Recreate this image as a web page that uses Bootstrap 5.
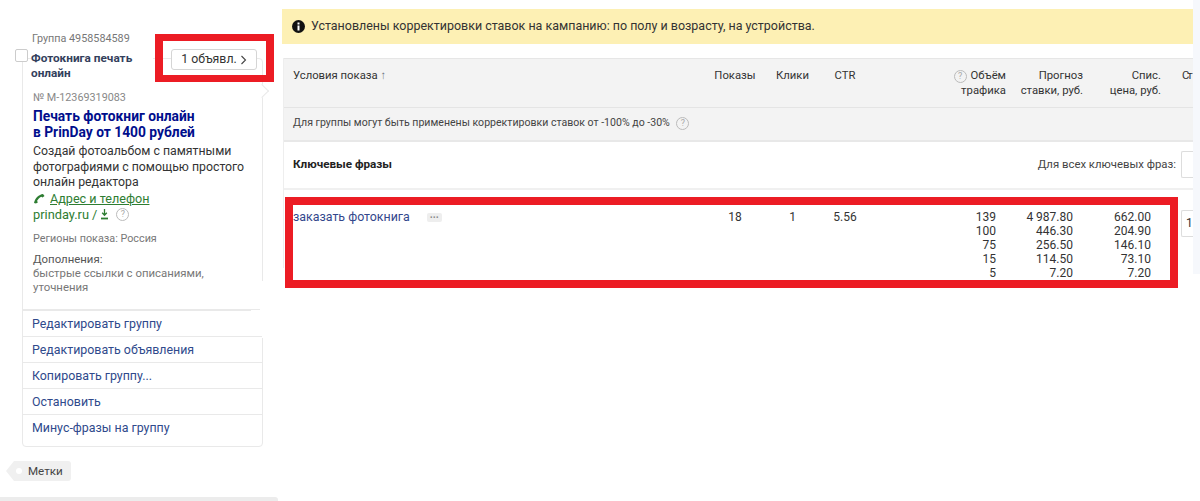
<!DOCTYPE html>
<html lang="ru"><head><meta charset="utf-8"><title>Группа</title>
<link href="https://cdn.jsdelivr.net/npm/bootstrap@5.3.0/dist/css/bootstrap.min.css" rel="stylesheet">
<style>
html,body{height:501px;overflow:hidden}
body{font-family:Roboto,"Noto Sans",sans-serif;font-size:12px;color:#333;background:#fff;position:relative}
.pagewrap{display:flex;height:501px}
.leftside{width:282px;flex:none;padding:31px 0 0 22px}
.grouplabel{font-size:10.8px;line-height:16px;color:#777;margin-left:10px;margin-bottom:11px}
.adcard{width:241px;--bs-card-border-color:#e9e9e9;--bs-card-border-radius:4px;--bs-card-inner-border-radius:3px;height:389px}
.adcard::before{content:"";position:absolute;right:-2px;top:222px;width:4px;height:57px;background:#fff}
.adcard::after{content:"";position:absolute;right:-5px;top:27px;width:10px;height:10px;background:#fff;border-top:1px solid #e9e9e9;border-right:1px solid #e9e9e9;transform:rotate(45deg)}
.chk{position:absolute;left:-8px;top:-10px;width:13px;height:13px;border:1px solid #ccc;border-radius:2px;background:#fff}
.headrow{display:flex;margin-top:-8px;justify-content:space-between;align-items:flex-start}
.adtitle{font-weight:700;font-size:11.8px;line-height:15px;color:#33405c;margin-left:8px;width:122px;background:#fff}
.adsbtn{font-size:12.3px;line-height:19px;height:21px;width:86px;margin:-2px 5px 0 0;border:1px solid #d5d5d5;border-radius:3px;background:#fff;padding:0;color:#333}
.adbody{padding:0 0 0 10px}
.adnum{font-size:10.8px;line-height:15px;color:#888;margin-top:9px}
.adhead{font-size:13.8px;font-weight:700;line-height:16px;color:#000e8c;margin-top:3px}
.addesc{font-size:12.3px;line-height:15.5px;color:#333;margin-top:4px}
.adlink{font-size:12.6px;line-height:16px;color:#2e7d32;margin-top:0;display:flex;align-items:center;gap:5px}
.adlink u{color:#2e7d32}
.adsite{font-size:12.8px;line-height:16px;color:#2e7d32;display:flex;align-items:center;gap:3px}
.adregion{font-size:10.8px;line-height:15px;color:#777;margin-top:8px}
.adextra{font-size:11.4px;line-height:14px;color:#777;margin-top:6px}
.adextra b{font-weight:400;color:#555;display:block}
.admenu{margin-top:15px;border-top:0;--bs-list-group-border-color:#e9e9e9;--bs-list-group-bg:transparent}
.admenu::before{content:"";display:block;height:1px;background:#e9e9e9;margin-right:11px}
.admenu .list-group-item{padding:0 0 0 9px;font-size:12.4px;line-height:25px;color:#2f4a8c}
.qmark{display:inline-flex;width:13px;height:13px;border:1px solid #bbb;border-radius:50%;font-size:9px;line-height:1;color:#aaa;align-items:center;justify-content:center;flex:none}
.tagpill{position:absolute;left:14px;top:461px;height:20px;padding:0 8px 0 14px;line-height:20px;font-size:11.6px;background:#f0f0f0;border-radius:0 3px 3px 0;color:#444}
.tagpill::before{content:"";position:absolute;left:-8px;top:0;border-style:solid;border-width:10px 8px 10px 0;border-color:transparent #f0f0f0 transparent transparent}
.tagpill::after{content:"";position:absolute;left:2px;top:7px;width:6px;height:6px;border-radius:50%;background:#fff}
.bottomshade{position:absolute;left:0;top:497px;width:278px;height:4px;background:#ececec;border-radius:0 3px 0 0}
.rightside{flex:1;min-width:0;padding-top:9px;padding-right:7px;position:relative}
.rightside::after{content:"";position:absolute;right:0;top:0;width:7px;height:274px;background:#f6f8fc}
.notice{height:35px;background:#fdf0b4;display:flex;align-items:center;gap:6px;padding-left:10px;font-size:12.46px;color:#333;margin-bottom:14px}
.tablewrap{margin-left:1px;overflow:hidden;height:222px;position:relative}
.tablewrap::before{content:"";position:absolute;left:0;top:0;width:1px;height:210px;background:#eee}
.kwtable{table-layout:fixed;width:910px;margin:0;--bs-table-bg:transparent;color:#333;font-size:12px}
.kwtable td,.kwtable th{padding:0;border:0;font-weight:400;vertical-align:top}
.headtr th{background:#f3f3f3;height:49px;padding-top:10px;line-height:14.5px;border-top:1px solid #e6e6e6;border-bottom:1px solid #e4e4e4;font-size:11.3px}
.notetr td{background:#f3f3f3;height:33px;font-size:10.57px;line-height:30px;padding-left:10px;border-bottom:2px solid #e8e8e8;color:#444}
.phrasetr td{height:48px;vertical-align:middle;border-bottom:2px solid #f0f0f0}
.datatr td{padding-top:20px;line-height:14px;font-size:12px}
.cellc{text-align:center}
.cellr{text-align:right;padding-right:10px!important}
.datatr .cellr{padding-right:20px!important}
.firstcell{padding-left:10px!important}
.lastcell{padding-left:10px!important;white-space:nowrap}
.headtr .lastcell{padding-left:11px!important;letter-spacing:-2px}
.kwlink{color:#33478c;margin-left:10px;font-size:12.4px;line-height:14px}
.dotsbtn{display:inline-block;width:15px;height:9px;background:#eee;border-radius:2px;margin-left:17px;font-size:10px;font-weight:700;line-height:9px;text-align:center;color:#888;vertical-align:middle}
.allinput{display:inline-block;width:12px;height:27px;border:1px solid #ddd;border-right:0;border-radius:2px 0 0 2px;background:#fff;vertical-align:middle;line-height:25px;padding-left:4px}
.keytitle{margin-left:10px;font-size:11.7px;font-weight:700;color:#222}
.keyall{font-size:11.35px;color:#444;margin-right:-5px}
.frame{position:absolute;border-style:solid;border-color:#ec1c24;pointer-events:none}
.frame1{left:155px;top:34px;width:119px;height:48px;border-width:7px 8px}
.frame2{left:285px;top:197px;width:893px;height:91px;border-width:8px}
</style></head>
<body>
<div class="pagewrap">
<aside class="leftside">
  <div class="grouplabel">Группа 4958584589</div>
  <div class="card adcard">
    <span class="chk"></span>
    <div class="headrow">
      <div class="adtitle">Фотокнига печать онлайн</div>
      <button type="button" class="adsbtn">1 объявл. <svg width="7" height="10" viewBox="0 0 7 10"><path d="M1.500 1l4 4-4 4" fill="none" stroke="#444" stroke-width="1.100"/></svg></button>
    </div>
    <div class="adbody">
      <div class="adnum">№ М-12369319083</div>
      <div class="adhead">Печать фотокниг онлайн<br>в PrinDay от 1400 рублей</div>
      <div class="addesc">Создай фотоальбом с памятными<br>фотографиями с помощью простого<br>онлайн редактора</div>
      <div class="adlink"><svg width="12" height="11" viewBox="0 0 12 11"><path d="M1 10C2 5 6 1.500 10 1l1.500 2-2 1.500-1.300-.8C6.500 4.500 5 6 4 8l1 1.300L3 10.500z" fill="#2e7d32"/></svg><u>Адрес и телефон</u></div>
      <div class="adsite">prinday.ru / <svg width="9" height="11" viewBox="0 0 9 11"><path d="M4.500 0v6M2.200 3.800l2.300 2.500 2.300-2.500" fill="none" stroke="#2e7d32" stroke-width="1.300"/><path d="M1 9.500h7" stroke="#2e7d32" stroke-width="1.800"/></svg> <span class="qmark ms-1">?</span></div>
      <div class="adregion">Регионы показа: Россия</div>
      <div class="adextra"><b>Дополнения:</b>быстрые ссылки с описаниями,<br>уточнения</div>
    </div>
    <div class="list-group list-group-flush admenu">
      <a class="list-group-item" href="#">Редактировать группу</a>
      <a class="list-group-item" href="#">Редактировать объявления</a>
      <a class="list-group-item" href="#">Копировать группу...</a>
      <a class="list-group-item" href="#">Остановить</a>
      <a class="list-group-item" href="#">Минус-фразы на группу</a>
    </div>
  </div>
  <div class="tagpill">Метки</div>
</aside>
<main class="rightside">
  <div class="notice"><svg width="13" height="13" viewBox="0 0 13 13"><circle cx="6.500" cy="6.500" r="6.500" fill="#111"/><rect x="5.500" y="5.500" width="2" height="5" fill="#fff"/><rect x="5.500" y="2.500" width="2" height="2" fill="#fff"/></svg><span>Установлены корректировки ставок на кампанию: по полу и возрасту, на устройства.</span></div>
  <div class="tablewrap">
    <table class="table kwtable">
      <colgroup><col style="width:417px"><col style="width:70px"><col style="width:45px"><col style="width:60px"><col style="width:141px"><col style="width:77px"><col style="width:78px"><col style="width:22px"></colgroup>
      <tr class="headtr">
        <th class="firstcell">Условия показа <span class="text-secondary">↑</span></th>
        <th class="cellc">Показы</th><th class="cellc">Клики</th><th class="cellc">CTR</th>
        <th class="cellr"><span class="qmark me-1">?</span>Объём<br>трафика</th>
        <th class="cellr">Прогноз<br>ставки, руб.</th>
        <th class="cellr">Спис.<br>цена, руб.</th>
        <th class="lastcell">Ст</th>
      </tr>
      <tr class="notetr"><td colspan="8">Для группы могут быть применены корректировки ставок от -100% до -30% <span class="qmark ms-1 align-middle">?</span></td></tr>
      <tr class="phrasetr">
        <td colspan="7"><div class="d-flex justify-content-between align-items-center"><b class="keytitle">Ключевые фразы</b><span class="keyall">Для всех ключевых фраз:</span></div></td>
        <td class="lastcell"><span class="allinput"></span></td>
      </tr>
      <tr class="datatr">
        <td><a class="kwlink text-decoration-none" href="#">заказать фотокнига</a><span class="dotsbtn">···</span></td>
        <td class="cellc">18</td><td class="cellc">1</td><td class="cellc">5.56</td>
        <td class="cellr">139<br>100<br>75<br>15<br>5</td>
        <td class="cellr">4 987.80<br>446.30<br>256.50<br>114.50<br>7.20</td>
        <td class="cellr">662.00<br>204.90<br>146.10<br>73.10<br>7.20</td>
        <td class="lastcell"><span class="allinput">1</span></td>
      </tr>
    </table>
  </div>
</main>
</div>
<div class="bottomshade"></div>
<div class="frame frame1"></div>
<div class="frame frame2"></div>
</body></html>
